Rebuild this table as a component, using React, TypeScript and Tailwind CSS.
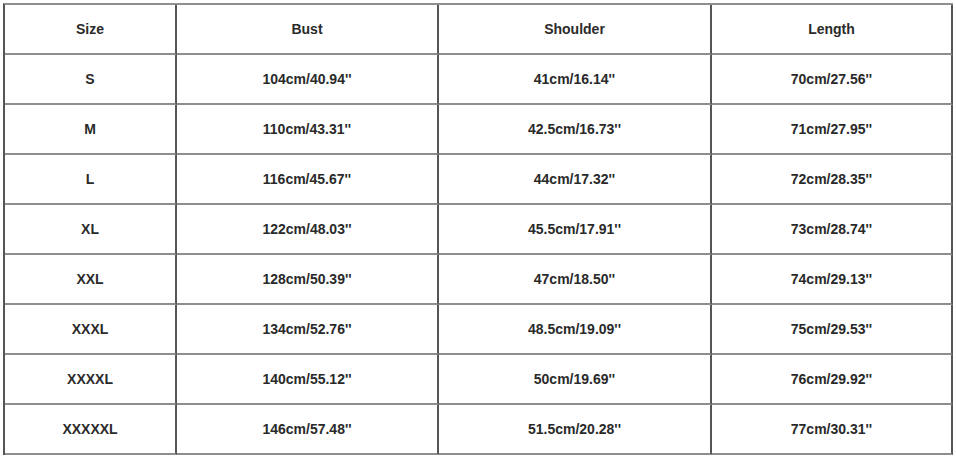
import React from "react";

const header = ["Size", "Bust", "Shoulder", "Length"];
const rows: string[][] = [
  ["S", "104cm/40.94''", "41cm/16.14''", "70cm/27.56''"],
  ["M", "110cm/43.31''", "42.5cm/16.73''", "71cm/27.95''"],
  ["L", "116cm/45.67''", "44cm/17.32''", "72cm/28.35''"],
  ["XL", "122cm/48.03''", "45.5cm/17.91''", "73cm/28.74''"],
  ["XXL", "128cm/50.39''", "47cm/18.50''", "74cm/29.13''"],
  ["XXXL", "134cm/52.76''", "48.5cm/19.09''", "75cm/29.53''"],
  ["XXXXL", "140cm/55.12''", "50cm/19.69''", "76cm/29.92''"],
  ["XXXXXL", "146cm/57.48''", "51.5cm/20.28''", "77cm/30.31''"],
];

export default function App() {
  const all = [header, ...rows];
  return (
    <div className="w-[956px] h-[457px] bg-white pt-[3px] pl-[3px]" style={{ fontFamily: '"Liberation Sans", Arial, sans-serif' }}>
      <div className="grid grid-cols-[172px_262px_273px_241px] w-max border-t-2 border-l-2 border-t-[#8e8e8e] border-l-[#555]">
        {all.map((r, i) =>
          r.map((c, j) => (
            <div
              key={`${i}-${j}`}
              className="h-[50px] flex items-center justify-center border-b-2 border-r-2 border-b-[#8e8e8e] border-r-[#555] text-[14px] font-bold text-[#2a2a2a]"
            >
              {c}
            </div>
          ))
        )}
      </div>
    </div>
  );
}
